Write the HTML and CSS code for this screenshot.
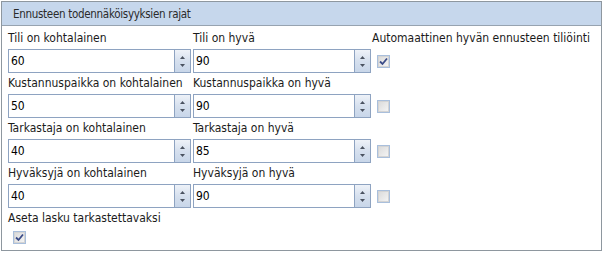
FILE: index.html
```html
<!DOCTYPE html>
<html lang="fi">
<head>
<meta charset="utf-8">
<title>Ennusteen todennäköisyyksien rajat</title>
<link rel="stylesheet" href="styles.css">
</head>
<body>
<div class="panel">
  <div class="panel-header">Ennusteen todennäköisyyksien rajat</div>
  <div class="panel-body">
    <div class="grid">
      <div class="label">Tili on kohtalainen</div>
      <div class="label">Tili on hyvä</div>
      <div class="label label-wide">Automaattinen hyvän ennusteen tiliöinti</div>

      <div class="spin spin-a"><span class="value">60</span><span class="btns"><svg class="arr" width="5" height="3" viewBox="0 0 5 3"><path d="M0 3H5L2.5 0Z"/></svg><svg class="arr" width="5" height="3" viewBox="0 0 5 3"><path d="M0 0H5L2.5 3Z"/></svg></span></div>
      <div class="spin spin-b"><span class="value">90</span><span class="btns"><svg class="arr" width="5" height="3" viewBox="0 0 5 3"><path d="M0 3H5L2.5 0Z"/></svg><svg class="arr" width="5" height="3" viewBox="0 0 5 3"><path d="M0 0H5L2.5 3Z"/></svg></span></div>
      <div class="cb-cell"><span class="cb checked"><svg width="9" height="9" viewBox="0 0 9 9"><path d="M1 4.5L3.5 7L8 1.5" /></svg></span></div>

      <div class="label">Kustannuspaikka on kohtalainen</div>
      <div class="label">Kustannuspaikka on hyvä</div>
      <div class="label"></div>

      <div class="spin spin-a"><span class="value">50</span><span class="btns"><svg class="arr" width="5" height="3" viewBox="0 0 5 3"><path d="M0 3H5L2.5 0Z"/></svg><svg class="arr" width="5" height="3" viewBox="0 0 5 3"><path d="M0 0H5L2.5 3Z"/></svg></span></div>
      <div class="spin spin-b"><span class="value">90</span><span class="btns"><svg class="arr" width="5" height="3" viewBox="0 0 5 3"><path d="M0 3H5L2.5 0Z"/></svg><svg class="arr" width="5" height="3" viewBox="0 0 5 3"><path d="M0 0H5L2.5 3Z"/></svg></span></div>
      <div class="cb-cell"><span class="cb"></span></div>

      <div class="label">Tarkastaja on kohtalainen</div>
      <div class="label">Tarkastaja on hyvä</div>
      <div class="label"></div>

      <div class="spin spin-a"><span class="value">40</span><span class="btns"><svg class="arr" width="5" height="3" viewBox="0 0 5 3"><path d="M0 3H5L2.5 0Z"/></svg><svg class="arr" width="5" height="3" viewBox="0 0 5 3"><path d="M0 0H5L2.5 3Z"/></svg></span></div>
      <div class="spin spin-b"><span class="value">85</span><span class="btns"><svg class="arr" width="5" height="3" viewBox="0 0 5 3"><path d="M0 3H5L2.5 0Z"/></svg><svg class="arr" width="5" height="3" viewBox="0 0 5 3"><path d="M0 0H5L2.5 3Z"/></svg></span></div>
      <div class="cb-cell"><span class="cb"></span></div>

      <div class="label">Hyväksyjä on kohtalainen</div>
      <div class="label">Hyväksyjä on hyvä</div>
      <div class="label"></div>

      <div class="spin spin-a"><span class="value">40</span><span class="btns"><svg class="arr" width="5" height="3" viewBox="0 0 5 3"><path d="M0 3H5L2.5 0Z"/></svg><svg class="arr" width="5" height="3" viewBox="0 0 5 3"><path d="M0 0H5L2.5 3Z"/></svg></span></div>
      <div class="spin spin-b"><span class="value">90</span><span class="btns"><svg class="arr" width="5" height="3" viewBox="0 0 5 3"><path d="M0 3H5L2.5 0Z"/></svg><svg class="arr" width="5" height="3" viewBox="0 0 5 3"><path d="M0 0H5L2.5 3Z"/></svg></span></div>
      <div class="cb-cell"><span class="cb"></span></div>
    </div>
    <div class="label">Aseta lasku tarkastettavaksi</div>
    <div class="cb-cell cb-single"><span class="cb checked"><svg width="9" height="9" viewBox="0 0 9 9"><path d="M1 4.5L3.5 7L8 1.5" /></svg></span></div>
  </div>
</div>
</body>
</html>
```
FILE: styles.css
```css
* { box-sizing: border-box; }
html, body { margin: 0; padding: 0; background: #ffffff; }
body {
  font-family: "DejaVu Sans Condensed", "DejaVu Sans", sans-serif;
  font-size: 12px;
  color: #1b1b1b;
}
.panel {
  margin: 1px 0 0 1px;
  width: 601px;
  height: 250px;
  border: 1px solid #8e979f;
  background: #fff;
}
.panel-header {
  height: 24px;
  padding: 4px 0 0 11px;
  background: #c6d7ec;
  border-bottom: 1px solid #97a3b0;
  color: #2b2b2b;
  font-size: 11.5px;
  letter-spacing: -0.3px;
  line-height: 17px;
}
.panel-body {
  padding: 2px 0 0 6px;
}
.grid {
  display: grid;
  grid-template-columns: 185px 179px 1fr;
}
.label {
  height: 21px;
  line-height: 21px;
  white-space: nowrap;
  overflow: visible;
}
.label-wide { padding-left: 0; }
.spin {
  display: flex;
  height: 24px;
  border: 1px solid #8ea3c1;
  background: #fff;
}
.spin-a { width: 183px; }
.spin-b { width: 178px; }
.value {
  flex: 1;
  padding-left: 2px;
  line-height: 22px;
  color: #000;
}
.btns {
  width: 16px;
  border-left: 1px solid #8ea3c1;
  background: linear-gradient(#eef2f8, #d6e0ee 50%, #c8d6e9);
  display: flex;
  flex-direction: column;
  align-items: center;
  justify-content: space-around;
  padding: 3px 0 3px;
}
.arr path { fill: #4a5260; }
.cb-cell {
  display: flex;
  align-items: center;
  padding-left: 5px;
}
.cb {
  width: 13px;
  height: 13px;
  border: 1px solid #a9bfdc;
  background: linear-gradient(135deg, #d9d9d9, #f6f6f6);
  box-shadow: inset 0 0 0 1px #d4d4d4;
  display: flex;
  align-items: center;
  justify-content: center;
}
.cb svg path {
  fill: none;
  stroke: #3b4c88;
  stroke-width: 1.8;
}
.cb-single {
  padding-top: 2px;
  padding-left: 5px;
}
```
